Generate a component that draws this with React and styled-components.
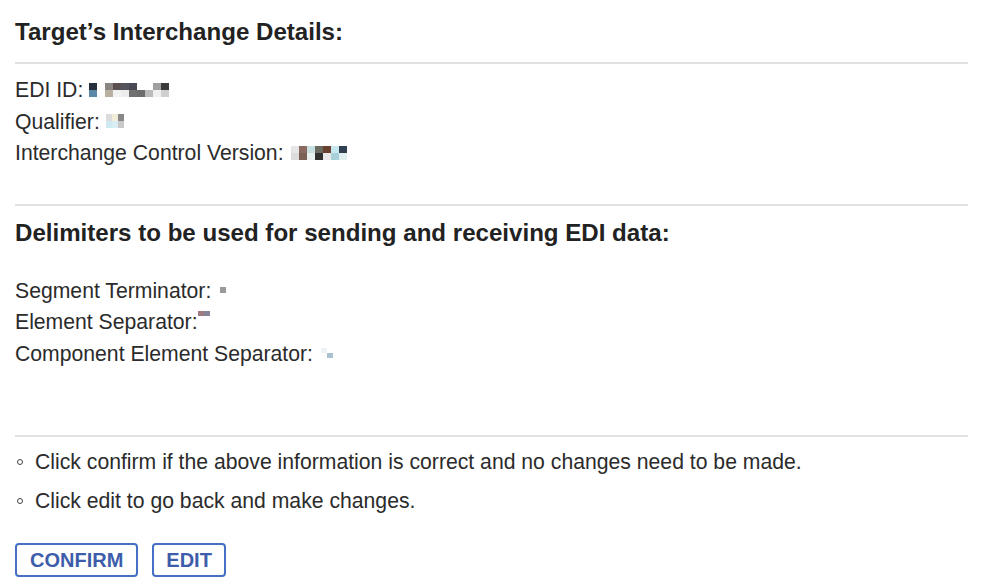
import React from 'react';
import styled, { createGlobalStyle } from 'styled-components';

const GlobalStyle = createGlobalStyle`
  html, body {
    margin: 0;
    padding: 0;
    background: #fff;
  }
  body {
    font-family: "Liberation Sans", Arial, sans-serif;
    color: #2b2b2b;
  }
`;

const Page = styled.div`
  width: 953px;
  padding: 16px 15px 0 15px;
`;

const Heading = styled.h2`
  margin: 0;
  font-size: 24.1px;
  line-height: 32px;
  font-weight: bold;
  color: #222;
`;

const Divider = styled.div`
  height: 2px;
  background: #e1e1e1;
  margin: ${p => p.$top}px 0 ${p => p.$bottom}px 0;
`;

const InfoList = styled.div`
  display: flex;
  flex-direction: column;
  margin-top: ${p => p.$top || 0}px;
`;

const InfoRow = styled.div`
  display: flex;
  align-items: center;
  font-size: 21.2px;
  line-height: 31.5px;
  height: 31.5px;
  white-space: pre;
`;

const Mosaic = styled.span`
  display: inline-grid;
  grid-auto-flow: row;
  margin-left: ${p => p.$gap}px;
  transform: translateY(${p => p.$shift || 0}px);
`;

const MosaicRow = styled.span`
  display: flex;
`;

const Cell = styled.span`
  display: block;
  width: ${p => p.$w}px;
  height: ${p => p.$h}px;
  background: ${p => p.$c || 'transparent'};
`;

const Notes = styled.ul`
  list-style: none;
  margin: 0;
  padding: 0;
  display: flex;
  flex-direction: column;
  gap: 8px;
`;

const Note = styled.li`
  display: flex;
  align-items: center;
  font-size: 21.2px;
  line-height: 31px;
  color: #2b2b2b;
`;

const Bullet = styled.span`
  display: block;
  width: 4px;
  height: 4px;
  border: 1.5px solid #444;
  border-radius: 50%;
  margin: 0 12px 0 2px;
`;

const Actions = styled.div`
  display: flex;
  gap: 14px;
  margin-top: 27px;
`;

const Button = styled.button`
  height: 34px;
  padding: 0 ${p => p.$pad}px;
  background: #fff;
  border: 2px solid #4570c4;
  border-radius: 4px;
  color: #3d5daa;
  font-family: "Liberation Sans", Arial, sans-serif;
  font-size: 20px;
  font-weight: bold;
  cursor: pointer;
`;

const Pixels = ({ rows, w = 6, h = 7, gap = 6, shift = 0 }) => (
  <Mosaic $gap={gap} $shift={shift}>
    {rows.map((row, i) => (
      <MosaicRow key={i}>
        {row.map((c, j) => (
          <Cell key={j} $w={w} $h={h} $c={c} />
        ))}
      </MosaicRow>
    ))}
  </Mosaic>
);

const ediId = [
  ['#26303c', null, '#8a8580', '#5a5050', '#55555e', '#4a4a55', null, null, '#a0a0a0', '#3a3a3a'],
  ['#5a8aa8', null, '#b8b0a0', '#f2f2f2', '#ececec', '#707070', '#6d6d6d', '#bbb', '#f0f0f0', '#cfcfcf'],
];
const qualifier = [
  ['#dcdcdc', '#f2edd8', '#888'],
  ['#cfeaf2', '#d8eef3', '#c9c9c9'],
];
const version = [
  ['#e6e6e6', '#8a6a60', '#c8e0e0', '#6a6a60', '#6a4030', '#c8e8f0', '#304050'],
  ['#dcdcdc', '#7a6055', '#e8f0f0', '#303030', '#e8e8e8', '#a8d0d8', '#e0f0f0'],
];

const App = () => (
  <Page>
    <GlobalStyle />
    <Heading>Target’s Interchange Details:</Heading>
    <Divider $top={14} $bottom={10} />
    <InfoList>
      <InfoRow>EDI ID:<Pixels rows={ediId} w={8} gap={6} /></InfoRow>
      <InfoRow>Qualifier:<Pixels rows={qualifier} w={6} gap={6} /></InfoRow>
      <InfoRow>Interchange Control Version:<Pixels rows={version} w={8} gap={7} /></InfoRow>
    </InfoList>
    <Divider $top={35} $bottom={11} />
    <Heading>Delimiters to be used for sending and receiving EDI data:</Heading>
    <InfoList $top={26}>
      <InfoRow>Segment Terminator:<Pixels rows={[['#9a9a9a']]} w={6} h={6} gap={9} /></InfoRow>
      <InfoRow>Element Separator:<Pixels rows={[['#a07c80', '#84849a']]} w={6} h={5} gap={0} shift={-8} /></InfoRow>
      <InfoRow>Component Element Separator:<Pixels rows={[['#eef2f4', null], [null, '#a8c2d0']]} w={6} h={5} gap={8} /></InfoRow>
    </InfoList>
    <Divider $top={66} $bottom={9} />
    <Notes>
      <Note><Bullet />Click confirm if the above information is correct and no changes need to be made.</Note>
      <Note><Bullet />Click edit to go back and make changes.</Note>
    </Notes>
    <Actions>
      <Button $pad={13}>CONFIRM</Button>
      <Button $pad={12}>EDIT</Button>
    </Actions>
  </Page>
);

export default App;
